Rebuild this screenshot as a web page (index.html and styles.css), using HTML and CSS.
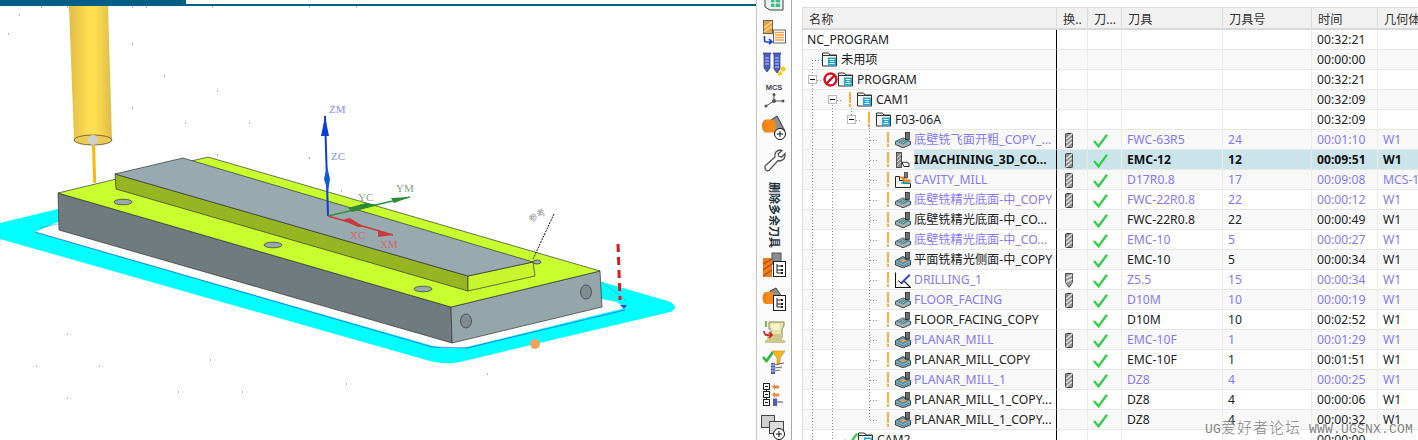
FILE: index.html
```html
<!DOCTYPE html>
<html>
<head>
  <meta charset="utf-8">
  <title>NC_PROGRAM</title>
  <link rel="stylesheet" href="styles.css">
</head>
<body>
  <!-- Shared icons -->
  <svg class="defs" width="0" height="0">
    <symbol id="folder" viewBox="0 0 15 15">
      <path d="M.5 3V1h6L8 3h6.500v11H.5z" fill="#f6f6f2" stroke="#333"/>
      <path d="M.5 3.500h14" stroke="#333"/>
      <rect x="6" y="5.500" width="8" height="8" fill="#1fa8d8"/>
      <path d="M7.500 7.500h5M8.500 9.500h3.500M7.500 11.500h5" stroke="#e8f8ff" stroke-width="1"/>
    </symbol>
    <symbol id="no" viewBox="0 0 15 15">
      <circle cx="7.500" cy="7.500" r="6" fill="#fff" stroke="#d3131d" stroke-width="2.400"/>
      <path d="M3.200 11.800 11.800 3.200" stroke="#d3131d" stroke-width="2.400"/>
    </symbol>
    <symbol id="tool" viewBox="0 0 8 15">
      <rect x=".5" y=".5" width="7" height="14" rx="1" fill="#8f8f8f" stroke="#444"/>
      <path d="M1 6 7 1M1 10l6-5M1 14l6-5" stroke="#e4e4e4" stroke-width="1.400"/>
    </symbol>
    <symbol id="drill" viewBox="0 0 8 15">
      <path d="M.5.5h7v9L4 14.500.5 9.500z" fill="#9a9a9a" stroke="#555"/>
      <path d="M1 5 7 2M1 9l6-3" stroke="#e4e4e4" stroke-width="1.400"/>
    </symbol>
    <symbol id="check" viewBox="0 0 15 15">
      <path d="M1 8 5.500 13.300 14 1.800" fill="none" stroke="#2fd04a" stroke-width="2.300"/>
    </symbol>
    <symbol id="op-floor" viewBox="0 0 16 16">
      <path d="M.5 9.500 8 6l7.500 3.500v3L8 15.800.5 12.500z" fill="#a4b0b4" stroke="#333" stroke-width=".9"/>
      <path d="M1 9.500 8 5.500l6.500 3.500L8 12.500z" fill="#2f8fb8"/>
      <path d="M3 9.500l5-3M5 10.500l5-3M7 11.500l4-3" stroke="#e0a860" stroke-width=".9"/>
      <rect x="10.500" y=".5" width="3.800" height="7" fill="#6f6f6f" stroke="#222" stroke-width=".8"/>
    </symbol>
    <symbol id="op-planar" viewBox="0 0 16 16">
      <path d="M.5 8.500 8 4.500l7.500 4v4.500L8 15.800.5 13z" fill="#9aa8ac" stroke="#333" stroke-width=".9"/>
      <path d="M1.500 8.500 8 5l6.500 3.500L8 12z" fill="#2f8fb8"/>
      <path d="M4 8.500 8 6.500l4 2-4 2z" fill="#ee9a4a"/>
      <path d="M1.500 11 8 14l6.500-3" fill="none" stroke="#2f8fb8" stroke-width="1.100"/>
      <rect x="10.500" y="0" width="3.800" height="7" fill="#6f6f6f" stroke="#222" stroke-width=".8"/>
    </symbol>
    <symbol id="op-imach" viewBox="0 0 16 16">
      <rect x="1.500" y=".5" width="5" height="15" fill="#8c8c8c" stroke="#333" stroke-width=".8"/>
      <path d="M2 6l4-4M2 10l4-4M2 14l4-4" stroke="#dcdcdc"/>
      <path d="M7 10.500c2-1 3 .5 4-.5l3 1.500v3H9z" fill="#fff" stroke="#222"/>
    </symbol>
    <symbol id="op-cavity" viewBox="0 0 16 16">
      <path d="M.5 4.500h4v4h4v3h7v4H.5z" fill="#f4f4f0" stroke="#222"/>
      <path d="M4.500 4.500h5v3h6v3h-6" fill="#ee8a1d"/>
      <path d="M6 11h9" stroke="#19a8cc" stroke-width="1.500"/>
      <rect x="9.500" y="0" width="3" height="6" fill="#777" stroke="#333" stroke-width=".7"/>
    </symbol>
    <symbol id="op-drill" viewBox="0 0 16 16">
      <path d="M.5.5v15h15L8.500 8.500" fill="none" stroke="#111" stroke-width="1.100"/>
      <path d="M5 11 14 2l1.500 1.500L7 12z" fill="#3150c8"/>
      <path d="M3 8.500 7 12" stroke="#111"/>
    </symbol>
  </svg>

  <div class="page">
    <!-- Graphics window -->
    <div class="viewport">
      <div class="titlebar"><div class="titlebar-fill"></div></div>
      <svg class="scene" viewBox="0 6 756 434" width="756" height="434">
        <defs>
          <linearGradient id="tool-metal" x1="0" x2="1" y1="0" y2="0">
            <stop offset="0" stop-color="#dfbc4a"/>
            <stop offset=".45" stop-color="#ffdf50"/>
            <stop offset=".6" stop-color="#ffdf50"/>
            <stop offset="1" stop-color="#dfbc4a"/>
          </linearGradient>
        </defs>

        <path class="specks" d="M19 15h1M8 34h1M132 44h1M100 76h1M164 76h1M217 91h1M132 108h1M185 123h1M249 123h1M217 155h1M309 158h1M341 191h1M67 334h1M36 366h1M99 366h1M210 360h1M346 384h1M178 392h1M242 392h1M67 398h1M487 374h1M41 7h1M67 7h1M132 7h1M146 7h1M212 7h1M309 7h1M356 7h1"/>

        <!-- Toolpath band -->
        <path d="M0 223 58 209 602 282 668 301Q681 307 670 312L460 362Q445 365 430 361L0 239Z" fill="#00ffff"/>
        <path d="M35 232 58 222 602 299 617 302 625 308 467 347Q450 350 433 346Z" fill="#fff"/>
        <path d="M35 232 432 347 467 348 625 310" fill="none" stroke="#2a4ae0" stroke-width=".7"/>
        <path d="M40 228 58 224M602 282 628 302" fill="none" stroke="#3a7ae0" stroke-width=".5"/>

        <!-- Block -->
        <polygon class="edge" points="58,193 451,307 452,343 59,230" fill="#6f7b7f"/>
        <polygon class="edge" points="451,307 600,271 602,307 452,343" fill="#95a6ab"/>
        <polygon class="edge" points="58,193 208,157 600,271 451,307" fill="#c8ff2e"/>
        <ellipse class="edge" cx="466" cy="321" rx="5.500" ry="7" fill="#7f8c90"/>
        <ellipse class="edge" cx="586" cy="292" rx="5.500" ry="7" fill="#7f8c90"/>
        <ellipse class="edge" cx="123" cy="202" rx="9" ry="2.800" fill="#9aa9ad"/>
        <ellipse class="edge" cx="273" cy="245" rx="9" ry="2.800" fill="#9aa9ad"/>
        <ellipse class="edge" cx="423" cy="289" rx="9" ry="2.800" fill="#9aa9ad"/>
        <ellipse class="edge" cx="537" cy="262" rx="4" ry="2" fill="#9aa9ad"/>
        <polygon class="edge" points="115,174 468,276 468,291 116,189" fill="#97b522"/>
        <polygon class="edge" points="468,276 533,262 535,276 468,291" fill="#c8f52e"/>
        <polygon class="edge" points="115,174 183,158 533,262 468,276" fill="#98a9af"/>

        <!-- Cutter -->
        <path d="M93.500 146 94.700 183" stroke="#ffb800" stroke-width="3"/>
        <path d="M69 6H108L112 140A19 5 0 0 1 74 140Z" fill="url(#tool-metal)"/>
        <ellipse cx="93" cy="140" rx="19" ry="5" fill="#eccb55" stroke="#76693a"/>
        <circle cx="93" cy="140" r="5" fill="#cfcfcf"/>

        <!-- Axes -->
        <path d="M328 216 325 116" stroke="#0a3fd8" stroke-width="2"/>
        <path d="M325 116 329 136H321Z" fill="#0a3fd8"/>
        <path d="M327 166 330 179 328 192 324 179Z" fill="#0a5fd8"/>
        <path d="M328 216 410 197" stroke="#2c9a35" stroke-width="1.500"/>
        <path d="M410 197 394 203 391 198ZM366 203 378 205 352 212 348 208Z" fill="#2c8a35"/>
        <path d="M328 216 393 235" stroke="#c93a3a" stroke-width="1.500"/>
        <path d="M393 235 378 237 378 230ZM350 218 364 227 358 227 342 220Z" fill="#c93a3a"/>
        <text class="axis axis-z" x="329" y="113">ZM</text>
        <text class="axis axis-z" x="331" y="160">ZC</text>
        <text class="axis axis-y" x="358" y="201">YC</text>
        <text class="axis axis-y" x="396" y="192">YM</text>
        <text class="axis axis-x" x="350" y="239">XC</text>
        <text class="axis axis-x" x="380" y="248">XM</text>

        <!-- Annotation and markers -->
        <path d="M554 214 533 259" stroke="#111" stroke-dasharray="2 1"/>
        <text class="note" transform="translate(531 223) rotate(-32)">参考</text>
        <path d="M618 244 620 300" stroke="#e01818" stroke-width="3" stroke-dasharray="8 5"/>
        <circle cx="535" cy="344" r="5" fill="#f2a35e"/>
        <path d="M620 305h7l-3 4z" fill="#2a4ae0"/>
      </svg>
    </div>

    <!-- Vertical toolbar -->
    <div class="toolbar">
      <div class="tool-btn tool-btn-cut">
        <svg viewBox="0 13 24 11" width="24" height="11"><path d="M3 9h18v14H8l-5-3z" fill="#e8f0ec" stroke="#444"/><path d="M9 12h9v8H9z" fill="#45b98a"/><path d="M9 16h9M13 12v8" stroke="#fff"/></svg>
      </div>
      <div class="tool-btn">
        <svg viewBox="0 0 24 24" width="24" height="24"><rect x="1.500" y=".5" width="9" height="13" fill="#f0a035" stroke="#666"/><path d="M2 8 10 2M2 12l8-6" stroke="#fbe0b0" stroke-width="1.500"/><rect x="11.500" y="10" width="12" height="13" fill="#fff" stroke="#666"/><path d="M13 12.500h9M13 15h9M13 17.500h9M13 20h9" stroke="#f3a04a" stroke-width="1.400"/><path d="M2.500 16v4q0 2 2 2h4M7 19l3 3-3 2" fill="none" stroke="#1640d8" stroke-width="1.600"/></svg>
      </div>
      <div class="tool-btn">
        <svg viewBox="0 0 24 24" width="24" height="24"><path d="M1 1h8L8 3v13l-3 4-3-4V3zM11 1h8l-1 2v14l-3 4-3-4V3z" fill="#4a5cc0" stroke="#2a3a80" stroke-width=".7"/><path d="M3 6h4M3 9h4M3 12h4M13 6h4M13 9h4M13 12h4M13 15h4" stroke="#c0c8f0"/><circle cx="21" cy="17" r="2.500" fill="#f5cc1a"/><circle cx="18" cy="21.500" r="2.200" fill="#f5cc1a"/></svg>
      </div>
      <div class="tool-btn">
        <svg viewBox="0 0 24 24" width="24" height="24"><text class="mcs" x="12" y="7" text-anchor="middle">MCS</text><path d="M12 11v7M12 18H21M12 18 4 23" stroke="#555" stroke-width="1"/><circle cx="12" cy="11.500" r="1.500" fill="#555"/><circle cx="12" cy="18" r="2" fill="#555"/><circle cx="21" cy="18" r="1.500" fill="#555"/><circle cx="4" cy="23" r="1.500" fill="#555"/></svg>
      </div>
      <div class="tool-btn">
        <svg viewBox="0 0 26 26" width="26" height="26"><path d="M10 6 16 2l8 15-6 6-6-6z" fill="#8a8f92" stroke="#333"/><ellipse cx="5" cy="12" rx="4" ry="6.500" fill="#f07d10"/><path d="M5 5.500h7a3 6.500 0 0 1 0 13H5z" fill="#f58a18"/><circle cx="19" cy="20" r="5.500" fill="#fff" stroke="#111"/><path d="M16 20h6M19 17v6" stroke="#111"/></svg>
      </div>
      <div class="tool-btn">
        <svg viewBox="0 0 24 24" width="24" height="24"><path d="M3 18 13 9q-1-6 5-7l2 .5-4 3.500 1 2.500 3 .5 3-3.500q1 6-5 7.500l-2-.5-9 10q-3 1-4-2z" fill="#fff" stroke="#555" stroke-width="1.300"/></svg>
      </div>
      <div class="tool-label">删除多余刀具</div>
      <div class="tool-btn">
        <svg viewBox="0 0 24 26" width="24" height="26"><rect x="10" y="1" width="9" height="11" fill="#8a8f92" stroke="#555"/><rect x="1" y="6" width="9" height="19" fill="#f07d1a"/><path d="M1 12 10 7M1 18l9-6M1 24l9-6" stroke="#a85010" stroke-width="1.400"/><rect x="11.500" y="9.500" width="12" height="15" fill="#fff" stroke="#222"/><path d="M15 12v9M15 14h4M15 18h4M15 21h4" stroke="#222"/><rect x="19" y="13" width="2" height="2" fill="#222"/><rect x="19" y="17" width="2" height="2" fill="#222"/><rect x="19" y="20" width="2" height="2" fill="#222"/></svg>
      </div>
      <div class="tool-btn">
        <svg viewBox="0 0 24 26" width="24" height="26"><path d="M8 5 14 2l8 12-6 4-6-5z" fill="#8a8f92" stroke="#444"/><ellipse cx="4" cy="12" rx="3.500" ry="6" fill="#f07d10"/><path d="M4 6h6a3 6 0 0 1 0 12H4z" fill="#f58a18"/><rect x="11.500" y="9.500" width="12" height="15" fill="#fff" stroke="#222"/><path d="M15 12v9M15 14h4M15 18h4M15 21h4" stroke="#222"/><rect x="19" y="13" width="2" height="2" fill="#222"/><rect x="19" y="17" width="2" height="2" fill="#222"/><rect x="19" y="20" width="2" height="2" fill="#222"/></svg>
      </div>
      <div class="tool-btn">
        <svg viewBox="0 0 24 24" width="24" height="24"><path d="M7 3h15v4l-2 3v9H9V10H7z" fill="#e8e3a8" stroke="#8a8a50"/><path d="M9 5h9v6H9z" fill="#f6f2cc"/><path d="M3 21h20v3H3zM5 15h15v6H5z" fill="#cfc88e"/><path d="M4 2v6" stroke="#7ab648" stroke-width="2"/><path d="M2 12q0 5 5 4h3M7 13l3 3-3 3" fill="none" stroke="#d81c1c" stroke-width="1.700"/></svg>
      </div>
      <div class="tool-btn">
        <svg viewBox="0 0 24 24" width="24" height="24"><path d="M1 7l3.500 4L11 2" fill="none" stroke="#26b838" stroke-width="2.600"/><path d="M10 1h13l-5 7v6h-3V8z" fill="#f5b722" stroke="#b98a10" stroke-width=".6"/><rect x="9" y="13" width="4" height="11" fill="#4a5cc0"/><path d="M9 15h4M9 18h4M9 21h4" stroke="#c8d0f4"/><path d="M13 15l9-2M13 18l7-1M13 21l5-1" stroke="#666"/></svg>
      </div>
      <div class="tool-btn">
        <svg viewBox="0 0 24 24" width="24" height="24"><g fill="#fff" stroke="#222"><rect x="1.500" y="1.500" width="6" height="6"/><rect x="1.500" y="9.500" width="6" height="6"/><rect x="1.500" y="17.500" width="6" height="6"/></g><path d="M3 4.500h3M3 12.500h3M3 20.500h3M4.500 7.500v2M4.500 15.500v2" stroke="#222"/><path d="M10 4.500 13 2v1.500h4v3h-4V8zM10 12.500 13 10v1.500h4v3h-4V16z" fill="#ee8a3a"/><rect x="11" y="16.500" width="4" height="7.500" fill="#4a5cc0"/><path d="M15 20h6" stroke="#555"/></svg>
      </div>
      <div class="tool-btn">
        <svg viewBox="0 0 26 26" width="26" height="26"><rect x=".5" y="1.500" width="13" height="12" fill="#cfcfcf" stroke="#444"/><rect x="8.500" y="7.500" width="14" height="12" fill="#dcdcdc" stroke="#444"/><circle cx="18" cy="20" r="5.500" fill="#fff" stroke="#111"/><path d="M15 20h6M18 17v6" stroke="#111"/></svg>
      </div>
    </div>

    <!-- Operation navigator -->
    <div class="panel">
      <table class="nav">
        <colgroup>
          <col class="c-name"><col class="c-swap"><col class="c-state"><col class="c-tool"><col class="c-num"><col class="c-time"><col class="c-geo">
        </colgroup>
        <thead>
          <tr><th class="h-name">名称</th><th>换..</th><th>刀...</th><th>刀具</th><th>刀具号</th><th>时间</th><th>几何体</th></tr>
        </thead>
        <tbody>
          <tr><td class="name"><div class="node lv0"><span>NC_PROGRAM</span></div></td><td></td><td></td><td></td><td></td><td>00:32:21</td><td></td></tr>
          <tr><td class="name"><div class="node lv1"><svg class="ic15"><use href="#folder"/></svg><span>未用项</span></div></td><td></td><td></td><td></td><td></td><td>00:00:00</td><td></td></tr>
          <tr><td class="name"><div class="node lv1b"><i class="box"></i><svg class="ic15 after-box"><use href="#no"/></svg><svg class="ic15"><use href="#folder"/></svg><span>PROGRAM</span></div></td><td></td><td></td><td></td><td></td><td>00:32:21</td><td></td></tr>
          <tr><td class="name"><div class="node lv2"><i class="box"></i><i class="bar bar-group"></i><svg class="ic15"><use href="#folder"/></svg><span>CAM1</span></div></td><td></td><td></td><td></td><td></td><td>00:32:09</td><td></td></tr>
          <tr><td class="name"><div class="node lv3"><i class="box"></i><i class="bar bar-group"></i><svg class="ic15"><use href="#folder"/></svg><span>F03-06A</span></div></td><td></td><td></td><td></td><td></td><td>00:32:09</td><td></td></tr>

          <tr class="done"><td class="name"><div class="node op"><i class="bar"></i><svg class="ic16"><use href="#op-floor"/></svg><span>底壁铣飞面开粗_COPY_...</span></div></td><td class="ic ic-swap"><svg class="ic-tool"><use href="#tool"/></svg></td><td class="ic"><svg class="ic15"><use href="#check"/></svg></td><td>FWC-63R5</td><td>24</td><td>00:01:10</td><td>W1</td></tr>
          <tr class="sel"><td class="name"><div class="node op"><i class="bar"></i><svg class="ic16"><use href="#op-imach"/></svg><span>IMACHINING_3D_CO...</span></div></td><td class="ic ic-swap"><svg class="ic-tool"><use href="#tool"/></svg></td><td class="ic"><svg class="ic15"><use href="#check"/></svg></td><td>EMC-12</td><td>12</td><td>00:09:51</td><td>W1</td></tr>
          <tr class="done"><td class="name"><div class="node op"><i class="bar"></i><svg class="ic16"><use href="#op-cavity"/></svg><span>CAVITY_MILL</span></div></td><td class="ic ic-swap"><svg class="ic-tool"><use href="#tool"/></svg></td><td class="ic"><svg class="ic15"><use href="#check"/></svg></td><td>D17R0.8</td><td>17</td><td>00:09:08</td><td>MCS-1</td></tr>
          <tr class="done"><td class="name"><div class="node op"><i class="bar"></i><svg class="ic16"><use href="#op-floor"/></svg><span>底壁铣精光底面-中_COPY</span></div></td><td class="ic ic-swap"><svg class="ic-tool"><use href="#tool"/></svg></td><td class="ic"><svg class="ic15"><use href="#check"/></svg></td><td>FWC-22R0.8</td><td>22</td><td>00:00:12</td><td>W1</td></tr>
          <tr><td class="name"><div class="node op"><i class="bar"></i><svg class="ic16"><use href="#op-floor"/></svg><span>底壁铣精光底面-中_CO...</span></div></td><td></td><td class="ic"><svg class="ic15"><use href="#check"/></svg></td><td>FWC-22R0.8</td><td>22</td><td>00:00:49</td><td>W1</td></tr>
          <tr class="done"><td class="name"><div class="node op"><i class="bar"></i><svg class="ic16"><use href="#op-floor"/></svg><span>底壁铣精光底面-中_CO...</span></div></td><td class="ic ic-swap"><svg class="ic-tool"><use href="#tool"/></svg></td><td class="ic"><svg class="ic15"><use href="#check"/></svg></td><td>EMC-10</td><td>5</td><td>00:00:27</td><td>W1</td></tr>
          <tr><td class="name"><div class="node op"><i class="bar"></i><svg class="ic16"><use href="#op-planar"/></svg><span>平面铣精光侧面-中_COPY</span></div></td><td></td><td class="ic"><svg class="ic15"><use href="#check"/></svg></td><td>EMC-10</td><td>5</td><td>00:00:34</td><td>W1</td></tr>
          <tr class="done"><td class="name"><div class="node op"><i class="bar"></i><svg class="ic16"><use href="#op-drill"/></svg><span>DRILLING_1</span></div></td><td class="ic ic-swap"><svg class="ic-tool"><use href="#drill"/></svg></td><td class="ic"><svg class="ic15"><use href="#check"/></svg></td><td>Z5.5</td><td>15</td><td>00:00:34</td><td>W1</td></tr>
          <tr class="done"><td class="name"><div class="node op"><i class="bar"></i><svg class="ic16"><use href="#op-floor"/></svg><span>FLOOR_FACING</span></div></td><td class="ic ic-swap"><svg class="ic-tool"><use href="#tool"/></svg></td><td class="ic"><svg class="ic15"><use href="#check"/></svg></td><td>D10M</td><td>10</td><td>00:00:19</td><td>W1</td></tr>
          <tr><td class="name"><div class="node op"><i class="bar"></i><svg class="ic16"><use href="#op-floor"/></svg><span>FLOOR_FACING_COPY</span></div></td><td></td><td class="ic"><svg class="ic15"><use href="#check"/></svg></td><td>D10M</td><td>10</td><td>00:02:52</td><td>W1</td></tr>
          <tr class="done"><td class="name"><div class="node op"><i class="bar"></i><svg class="ic16"><use href="#op-planar"/></svg><span>PLANAR_MILL</span></div></td><td class="ic ic-swap"><svg class="ic-tool"><use href="#tool"/></svg></td><td class="ic"><svg class="ic15"><use href="#check"/></svg></td><td>EMC-10F</td><td>1</td><td>00:01:29</td><td>W1</td></tr>
          <tr><td class="name"><div class="node op"><i class="bar"></i><svg class="ic16"><use href="#op-planar"/></svg><span>PLANAR_MILL_COPY</span></div></td><td></td><td class="ic"><svg class="ic15"><use href="#check"/></svg></td><td>EMC-10F</td><td>1</td><td>00:01:51</td><td>W1</td></tr>
          <tr class="done"><td class="name"><div class="node op"><i class="bar"></i><svg class="ic16"><use href="#op-planar"/></svg><span>PLANAR_MILL_1</span></div></td><td class="ic ic-swap"><svg class="ic-tool"><use href="#tool"/></svg></td><td class="ic"><svg class="ic15"><use href="#check"/></svg></td><td>DZ8</td><td>4</td><td>00:00:25</td><td>W1</td></tr>
          <tr><td class="name"><div class="node op"><i class="bar"></i><svg class="ic16"><use href="#op-planar"/></svg><span>PLANAR_MILL_1_COPY...</span></div></td><td></td><td class="ic"><svg class="ic15"><use href="#check"/></svg></td><td>DZ8</td><td>4</td><td>00:00:06</td><td>W1</td></tr>
          <tr><td class="name"><div class="node op"><i class="bar"></i><svg class="ic16"><use href="#op-planar"/></svg><span>PLANAR_MILL_1_COPY...</span></div></td><td></td><td class="ic"><svg class="ic15"><use href="#check"/></svg></td><td>DZ8</td><td>4</td><td>00:00:32</td><td>W1</td></tr>
          <tr><td class="name"><div class="node lv2 lv2-check"><svg class="ic15"><use href="#check"/></svg><svg class="ic15"><use href="#folder"/></svg><span>CAM2</span></div></td><td></td><td></td><td></td><td></td><td>00:00:00</td><td></td></tr>
        </tbody>
      </table>

      <!-- Tree guide lines, panel-local coordinates -->
      <svg class="guides" width="616" height="440">
        <path d="M10 60.500h10M10.500 60v16M10.500 85v355M15 80.500h6M30.500 105v335M35 100.500h5M49.500 108v8M54 120.500h5M67.500 125V420.500M68 140.500h8M68 160.500h8M68 180.500h8M68 200.500h8M68 220.500h8M68 240.500h8M68 260.500h8M68 280.500h8M68 300.500h8M68 320.500h8M68 340.500h8M68 360.500h8M68 380.500h8M68 400.500h8M68 420.500h8"/>
      </svg>

      <div class="watermark">UG<span class="wm-cjk">爱好者论坛</span> WWW.UGSNX.COM</div>
    </div>
  </div>
</body>
</html>
```

FILE: styles.css
```css
* {
  box-sizing: border-box;
  margin: 0;
  padding: 0;
}

html, body {
  width: 100%;
  height: 100%;
  overflow: hidden;
  background-color: #fff;
  font-family: 'Noto Sans', 'Noto Sans CJK SC', sans-serif;
  font-size: 12.2px;
  color: #222;
}

.defs {
  display: block;
}

.page {
  display: flex;
  width: 1418px;
  height: 440px;
  overflow: hidden;
}

/* Graphics window */
.viewport {
  flex: 0 0 756px;
  height: 440px;
}

.titlebar {
  height: 6px;
  display: flex;
  align-items: flex-start;
  border-bottom: 2px solid #005f85;
}

.titlebar-fill {
  width: 186px;
  height: 6px;
  background-color: #005f85;
  flex: none;
}

.scene {
  display: block;
}

.specks {
  stroke: #667;
  stroke-width: 1;
  fill: none;
}

.edge {
  stroke: #333;
  stroke-width: 0.7;
}

.axis {
  font-family: 'Liberation Serif', serif;
  font-size: 11px;
}

.axis-z { fill: #7f8cf2; }
.axis-y { fill: #7ea57e; }
.axis-x { fill: #d66a6a; }

.note {
  font-family: 'Noto Sans CJK SC', sans-serif;
  font-size: 9px;
  fill: #999;
}

/* Toolbar */
.toolbar {
  flex: 0 0 36px;
  height: 440px;
  background-color: #fbfbfb;
  border-left: 1px solid #c8c8c8;
  border-right: 1px solid #a8a8a8;
  display: grid;
  grid-template-rows: 17px 30px 34px 28px 36px 30px 73px 34px 33px 31px 32px 32px 34px;
}

.tool-btn {
  display: flex;
  align-items: center;
  justify-content: center;
}

.tool-btn-cut {
  align-items: flex-start;
}

.tool-btn svg {
  display: block;
  overflow: visible;
}

.mcs {
  font-family: 'Liberation Sans', sans-serif;
  font-size: 7.5px;
  font-weight: bold;
  fill: #444;
}

.tool-label {
  writing-mode: vertical-rl;
  text-orientation: sideways;
  font-size: 11px;
  font-weight: 700;
  line-height: 1;
  text-align: center;
  height: 66px;
  margin: 7px auto 0;
  color: #20303c;
}

/* Navigator */
.panel {
  flex: 1;
  position: relative;
  height: 440px;
  margin-left: 10px;
  min-width: 0;
  overflow: hidden;
  padding-top: 7px;
}

.nav {
  table-layout: fixed;
  width: 698px;
  border-collapse: separate;
  border-spacing: 0;
}

.c-name { width: 255px; }
.c-swap { width: 31px; }
.c-state { width: 34px; }
.c-tool { width: 101px; }
.c-num { width: 89px; }
.c-time { width: 66px; }
.c-geo { width: 122px; }

.nav th {
  height: 23px;
  padding: 2px 0 0 6px;
  text-align: left;
  font-weight: 400;
  color: #333;
  background-color: #f1f1f1;
  border-top: 1px solid #dcdcdc;
  border-right: 1px solid #dcdcdc;
  border-bottom: 2px solid #d8d8d8;
  white-space: nowrap;
  overflow: hidden;
}

.nav th.h-name {
  border-left: 1px solid #dcdcdc;
}

.nav td {
  height: 20px;
  padding: 0 0 0 5px;
  line-height: 19px;
  border-right: 1px solid #ececec;
  border-bottom: 1px solid #e8e8e8;
  white-space: nowrap;
  overflow: hidden;
  background-color: #fff;
  color: #222;
}

.nav tbody tr:nth-child(even) td {
  background-color: #f8f8f8;
}

.nav td.name {
  padding: 0;
  border-right: 1px solid #000;
  border-left: 1px solid #dcdcdc;
}

.nav td.ic {
  padding: 0 0 0 5px;
  text-align: left;
}

.nav td.ic-swap {
  padding-left: 8px;
}

.nav td.ic svg {
  display: inline-block;
  vertical-align: middle;
}

.done td,
.done .node span {
  color: #8679f5;
}

.nav tr.done td {
  color: #8679f5;
}

.nav tr.sel td {
  font-weight: 700;
  background-color: #cbe4ea;
  color: #111;
}

.nav tr.sel td.name {
  background-color: #f8f8f8;
}

.sel .node span {
  flex: 1;
  align-self: stretch;
  background-color: #cbe4ea;
}

.node {
  display: flex;
  align-items: center;
  height: 19px;
}

.node span {
  margin-left: 4px;
}

.lv0 { padding-left: 0; }
.lv1 { padding-left: 19px; }
.lv1b { padding-left: 5px; }
.lv2 { padding-left: 25px; }
.lv3 { padding-left: 44px; }
.op { padding-left: 84px; }
.lv2-check { padding-left: 40px; }

.op span {
  margin-left: 3px;
}

.ic15 {
  display: block;
  flex: none;
  width: 15px;
  height: 15px;
}

.ic16 {
  display: block;
  flex: none;
  width: 16px;
  height: 16px;
  margin-left: 6px;
}

.ic-tool {
  width: 8px;
  height: 15px;
}

.after-box {
  margin-left: 6px;
}

/* Expander box */
.box {
  flex: none;
  position: relative;
  width: 9px;
  height: 9px;
  background-color: #fff;
  border: 1px solid #bbb;
}

.box::after {
  content: "";
  position: absolute;
  left: 1px;
  top: 3px;
  width: 5px;
  height: 1px;
  background-color: #111;
}

/* Orange status bar with the dot under it */
.bar {
  flex: none;
  width: 2px;
  height: 15px;
  background: linear-gradient(#ffad3c 0 11px, transparent 11px 12px, #ffad3c 12px);
}

.bar-group {
  margin-left: 12px;
  margin-right: 6px;
}

.guides {
  position: absolute;
  left: 0;
  top: 0;
  pointer-events: none;
}

.guides path {
  fill: none;
  stroke: #8a8a8a;
  stroke-width: 1;
  stroke-dasharray: 1 2;
}

.watermark {
  position: absolute;
  left: 403px;
  top: 416px;
  font-family: 'Liberation Mono', 'Noto Sans CJK SC', monospace;
  font-size: 13px;
  letter-spacing: 0.2px;
  color: #858585;
  white-space: nowrap;
}

.wm-cjk {
  font-family: 'Noto Sans CJK SC', sans-serif;
  font-size: 15px;
  font-weight: 300;
  letter-spacing: 1px;
}
```
